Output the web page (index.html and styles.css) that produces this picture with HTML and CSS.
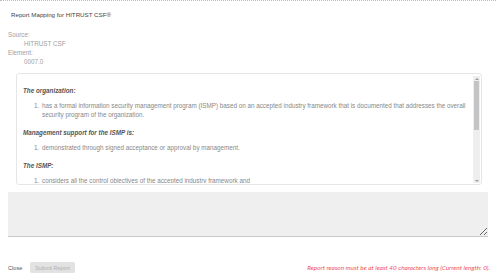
FILE: index.html
```html
<!DOCTYPE html>
<html lang="en">
<head>
    <meta charset="UTF-8">
    <meta name="viewport" content="width=device-width, initial-scale=1.0">
    <title>Report Mapping</title>
    <link rel="stylesheet" href="styles.css">
</head>
<body>
    <div class="modal">
        <header>
            <h1>Report Mapping for HITRUST CSF®</h1>
        </header>

        <div class="meta">
            <div class="meta-label">Source:</div>
            <div class="meta-value">HITRUST CSF</div>
            <div class="meta-label">Element:</div>
            <div class="meta-value">0007.0</div>
        </div>

        <div class="requirement">
            <div class="req-content">
                <p class="req-heading">The organization:</p>
                <ol>
                    <li>has a formal information security management program (ISMP) based on an accepted industry framework that is documented that addresses the overall security program of the organization.</li>
                </ol>
                <p class="req-heading">Management support for the ISMP is:</p>
                <ol>
                    <li>demonstrated through signed acceptance or approval by management.</li>
                </ol>
                <p class="req-heading">The ISMP:</p>
                <ol class="last">
                    <li>considers all the control objectives of the accepted industry framework and</li>
                </ol>
            </div>
            <div class="scrollbar">
                <span class="arrow up"></span>
                <span class="thumb"></span>
                <span class="track"></span>
                <span class="arrow down"></span>
            </div>
        </div>

        <textarea class="reason"></textarea>

        <footer>
            <div class="actions">
                <button class="btn-link">Close</button>
                <button class="btn-submit" disabled>Submit Report</button>
            </div>
            <div class="error">Report reason must be at least 40 characters long (Current length: 0).</div>
        </footer>
    </div>
</body>
</html>
```

FILE: styles.css
```css
* {
    margin: 0;
    padding: 0;
    box-sizing: border-box;
}

body {
    font-family: 'Liberation Sans', Arial, sans-serif;
    font-size: 6.3px;
    line-height: 9px;
    color: #444;
    background: #fff;
}

.modal {
    border-top: 1px dotted #bbb;
    height: 279px;
    display: flex;
    flex-direction: column;
}

header {
    padding: 9px 11px 0;
}

h1 {
    font-weight: 400;
    font-size: 6.2px;
    line-height: 9px;
    color: #444;
}

.meta {
    padding: 11px 8px 0;
    color: #a0a0a0;
}

.meta-value {
    padding-left: 16px;
}

/* requirement text box with its own scrollbar */
.requirement {
    margin: 7px 14px 0 16px;
    height: 112px;
    display: flex;
    border: 1px solid #e6e6e6;
    border-radius: 3px;
    padding: 2px 1px 1px 6px;
    color: #888;
}

.req-content {
    flex: 1;
    overflow: hidden;
    padding-top: 10px;
}

.scrollbar {
    width: 7px;
    display: flex;
    flex-direction: column;
    background: #eee;
}

.arrow {
    height: 5px;
    display: flex;
    align-items: center;
    justify-content: center;
}

.arrow::before {
    content: '';
    border-left: 2px solid transparent;
    border-right: 2px solid transparent;
}

.arrow.up::before {
    border-bottom: 2px solid #999;
}

.arrow.down::before {
    border-top: 2px solid #999;
}

.thumb {
    height: 49px;
    margin: 0 1px;
    background: #c4c4c4;
}

.track {
    flex: 1;
}

.req-heading {
    font-style: italic;
    font-weight: 700;
    color: #555;
    margin-bottom: 6px;
}

ol {
    padding-left: 18px;
    margin-bottom: 9px;
}

ol.last {
    margin-bottom: 0;
}

li {
    padding-left: 1px;
}

.reason {
    margin: 7px 8px 0;
    height: 45px;
    background: #efefef;
    border: none;
    border-bottom: 1px solid #c8c8c8;
    font-family: inherit;
    font-size: 7px;
    outline: none;
}

footer {
    display: flex;
    align-items: center;
    justify-content: space-between;
    padding: 25px 4px 0 8px;
}

.actions {
    display: flex;
    align-items: center;
    gap: 8px;
}

.btn-link {
    background: none;
    border: none;
    font-family: inherit;
    font-size: 5.6px;
    color: #555;
}

.btn-submit {
    background: #e2e2e2;
    border: none;
    border-radius: 2px;
    padding: 1px 5px;
    height: 11px;
    font-family: inherit;
    font-size: 5.4px;
    color: #b0b0b0;
}

.error {
    font-family: 'Lato', 'Open Sans', sans-serif;
    font-style: italic;
    font-size: 6.4px;
    white-space: nowrap;
    padding-right: 2px;
    color: #f0505a;
}
```
